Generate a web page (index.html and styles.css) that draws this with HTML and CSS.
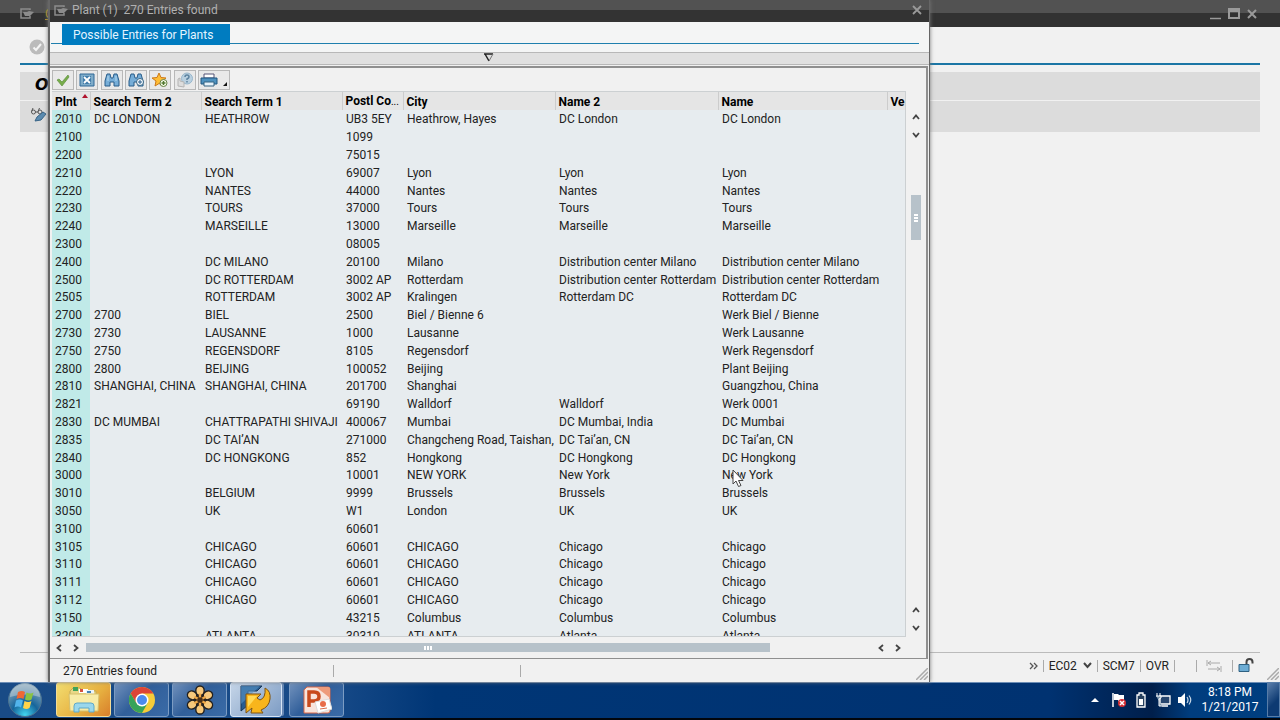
FILE: index.html
```html
<!DOCTYPE html>
<html lang="en">
<head>
<meta charset="utf-8">
<title>Plant (1) 270 Entries found</title>
<link rel="stylesheet" href="styles.css">
</head>
<body>
<main class="desktop">
  <section class="window">
    <header class="window-title">
      <button class="menu-btn" aria-label="Menu"><svg width="14" height="11" viewBox="0 0 14 11"><path d="M10 2V1H1v9h9V8" fill="none" stroke="#8c8c8c" stroke-width="1.500"/><path d="M3 4h4l2-1 5 1-4 4H5z" fill="#8c8c8c"/></svg></button>
      <span class="menu-word">G</span>
      <span class="controls">
        <button aria-label="Minimize"><svg width="12" height="12" viewBox="0 0 12 12"><path d="M0 10.500h11" stroke="#9a9a9a" stroke-width="1.500"/></svg></button>
        <button aria-label="Maximize"><svg width="12" height="12" viewBox="0 0 12 12"><path d="M1 1h10v9H1zM1 3h10" fill="none" stroke="#9a9a9a" stroke-width="2"/></svg></button>
        <button aria-label="Close window"><svg width="12" height="12" viewBox="0 0 12 12"><path d="M2 2l8 8M10 2l-8 8" stroke="#9a9a9a" stroke-width="2"/></svg></button>
      </span>
    </header>
    <div class="window-bar"><svg width="16" height="16" viewBox="0 0 16 16"><circle cx="8" cy="8" r="7.500" fill="#bbb"/><path d="M4.500 8.500l2.500 2.500 5-6" fill="none" stroke="#f4f4f4" stroke-width="2"/></svg></div>
    <h1 class="window-heading">O</h1>
    <div class="window-tools"><svg width="18" height="18" viewBox="0 0 18 18"><g fill="none" stroke="#555"><circle cx="3.500" cy="6" r="2"/><circle cx="10" cy="6" r="2"/><path d="M1.500 5.500L3 2M8 5.500L9.500 2M5.500 6H8"/></g><path d="M5 15l2-4 6-5 3 2-5 6z" fill="#5b8bb0" stroke="#386487"/></svg></div>
    <div class="window-body"></div>
    <footer class="window-status">
      <svg width="9" height="10" viewBox="0 0 9 10"><path d="M1 2l3 3-3 3M5 2l3 3-3 3" fill="none" stroke="#555" stroke-width="1.300"/></svg>
      <i class="sep"></i>
      <select aria-label="Transaction"><option>EC02</option></select>
      <svg class="drop" width="9" height="8" viewBox="0 0 9 8"><path d="M1 1l3.500 4L8 1" fill="none" stroke="#444" stroke-width="2"/></svg>
      <i class="sep"></i><span>SCM7</span><i class="sep"></i><span>OVR</span><i class="sep"></i>
      <i class="sep far"></i>
      <svg class="arrows" width="16" height="12" viewBox="0 0 16 12"><path d="M1 0v6M2 3h12M5 1L2 3l3 2M15 6v6M2 9h12M11 7l3 2-3 2" fill="none" stroke="#aaa"/></svg>
      <i class="sep"></i>
      <svg width="16" height="15" viewBox="0 0 16 15"><path d="M8.500 7V4q0-3 3-3t3 3v1.500" fill="none" stroke="#444" stroke-width="2"/><path d="M1 6.500h10v7H1z" fill="#6cacd4" stroke="#2e6182"/></svg>
    </footer>
    <svg class="grip" width="12" height="12" viewBox="0 0 12 12"><path d="M0 12L12 0M4 12l8-8M8 12l4-4" stroke="#aaa" stroke-width="1.500"/></svg>
  </section>

  <section class="dialog" role="dialog" aria-label="Plant (1) 270 Entries found">
    <header class="dialog-title">
      <svg width="14" height="11" viewBox="0 0 14 11"><path d="M10 2V1H1v9h9V8" fill="none" stroke="#8c8c8c" stroke-width="1.500"/><path d="M3 4h4l2-1 5 1-4 4H5z" fill="#8c8c8c"/></svg>
      <span>Plant (1)&nbsp; 270 Entries found</span>
      <button aria-label="Close dialog"><svg width="12" height="12" viewBox="0 0 12 12"><path d="M2 2l8 8M10 2l-8 8" stroke="#9a9a9a" stroke-width="1.800"/></svg></button>
    </header>
    <div class="tabs"><button>Possible Entries for Plants</button></div>
    <div class="splitter"><svg width="10" height="9" viewBox="0 0 10 9"><path d="M1 1h8L5 8z" fill="#ddd"/><path d="M0 1h9M1 1l4 7" fill="none" stroke="#222" stroke-width="1.500"/><path d="M9 1L5 8" stroke="#777"/></svg></div>
    <div class="pane">
      <div class="tools">
        <button aria-label="Copy"><svg width="16" height="16" viewBox="0 0 16 16"><path d="M2 8l2-1 3 3 6-7 1 2-7 9z" fill="#78ad4b" stroke="#5f9140" stroke-width=".7"/></svg></button>
        <button aria-label="Close list"><svg width="16" height="16" viewBox="0 0 16 16"><path d="M1 2h14v12H1z" fill="#7facc9" stroke="#306997"/><path d="M4 4h8v8H4z" fill="#427dab"/><path d="M5 5l6 6M11 5l-6 6" stroke="#fff" stroke-width="1.800"/></svg></button>
        <button aria-label="Find"><svg width="16" height="16" viewBox="0 0 16 16"><path d="M3 2h3l1 4h2l1-4h3l2 7v5h-5v-4H6v4H1V9z" fill="#76add7" stroke="#285c89"/><path d="M4 4v5M12 4v5" stroke="#b9dbef"/></svg></button>
        <button aria-label="Find next"><svg width="16" height="16" viewBox="0 0 16 16"><path d="M3 2h3l1 4h2l1-4h3l2 7v5h-5v-4H6v4H1V9z" fill="#76add7" stroke="#285c89"/><circle cx="12" cy="10" r="3.500" fill="#f7fbff" stroke="#386684"/><path d="M12 8v4M10 10h4" stroke="#285c89"/></svg></button>
        <button aria-label="Add to personal list"><svg width="16" height="16" viewBox="0 0 16 16"><path d="M7 1l2 4.500 5 .5-4 3 1 5-4-2.500L3 14l1-5-4-3 5-.5z" fill="#ffbd35" stroke="#cc7918"/><circle cx="11.500" cy="11" r="3.500" fill="#f6fce9" stroke="#668345"/><path d="M11.500 9v4M9.500 11h4" stroke="#507730" stroke-width="1.400"/></svg></button>
        <button aria-label="Help"><svg width="16" height="16" viewBox="0 0 16 16"><circle cx="10" cy="6.500" r="5.500" fill="#b9d0e0" stroke="#98b6cb"/><path d="M8 5q0-2 2-2t2 2q0 1-2 2v1M10 9v1.500" fill="none" stroke="#5d83a0" stroke-width="1.500"/><path d="M1 14V7l2-1v3l4 1v5z" fill="#ddd" stroke="#b4b4b4"/></svg></button>
        <button class="print" aria-label="Print"><svg width="18" height="16" viewBox="0 0 18 16"><path d="M4 2h10v4H4z" fill="#fff" stroke="#557"/><path d="M1 6h16v6H1z" fill="#4e91be" stroke="#215680"/><path d="M4 10h10v4H4z" fill="#e6f2fa" stroke="#356281"/></svg><svg width="6" height="16" viewBox="0 0 6 16"><path d="M5 10v4H1z" fill="#111"/></svg></button>
      </div>
      <div class="grid">
        <div class="list">
        <table>
          <colgroup><col class="c-plnt"><col class="c-st2"><col class="c-st1"><col class="c-post"><col class="c-city"><col class="c-name2"><col class="c-name"><col></colgroup>
          <thead><tr><th>Plnt<svg class="sort" width="6" height="4" viewBox="0 0 6 4"><path d="M0 4l3-4 3 4z" fill="#b0122d"/></svg><th>Search Term 2<th>Search Term 1<th class="cut">Postl Co<small>...</small><th>City<th>Name 2<th>Name<th>Ve</tr></thead>
          <tbody>
          <tr><td>2010<td>DC LONDON<td>HEATHROW<td>UB3 5EY<td>Heathrow, Hayes<td>DC London<td>DC London<td></tr>
          <tr><td>2100<td><td><td>1099<td><td><td><td></tr>
          <tr><td>2200<td><td><td>75015<td><td><td><td></tr>
          <tr><td>2210<td><td>LYON<td>69007<td>Lyon<td>Lyon<td>Lyon<td></tr>
          <tr><td>2220<td><td>NANTES<td>44000<td>Nantes<td>Nantes<td>Nantes<td></tr>
          <tr><td>2230<td><td>TOURS<td>37000<td>Tours<td>Tours<td>Tours<td></tr>
          <tr><td>2240<td><td>MARSEILLE<td>13000<td>Marseille<td>Marseille<td>Marseille<td></tr>
          <tr><td>2300<td><td><td>08005<td><td><td><td></tr>
          <tr><td>2400<td><td>DC MILANO<td>20100<td>Milano<td>Distribution center Milano<td>Distribution center Milano<td></tr>
          <tr><td>2500<td><td>DC ROTTERDAM<td>3002 AP<td>Rotterdam<td>Distribution center Rotterdam<td>Distribution center Rotterdam<td></tr>
          <tr><td>2505<td><td>ROTTERDAM<td>3002 AP<td>Kralingen<td>Rotterdam DC<td>Rotterdam DC<td></tr>
          <tr><td>2700<td>2700<td>BIEL<td>2500<td>Biel / Bienne 6<td><td>Werk Biel / Bienne<td></tr>
          <tr><td>2730<td>2730<td>LAUSANNE<td>1000<td>Lausanne<td><td>Werk Lausanne<td></tr>
          <tr><td>2750<td>2750<td>REGENSDORF<td>8105<td>Regensdorf<td><td>Werk Regensdorf<td></tr>
          <tr><td>2800<td>2800<td>BEIJING<td>100052<td>Beijing<td><td>Plant Beijing<td></tr>
          <tr><td>2810<td>SHANGHAI, CHINA<td>SHANGHAI, CHINA<td>201700<td>Shanghai<td><td>Guangzhou, China<td></tr>
          <tr><td>2821<td><td><td>69190<td>Walldorf<td>Walldorf<td>Werk 0001<td></tr>
          <tr><td>2830<td>DC MUMBAI<td>CHATTRAPATHI SHIVAJI<td>400067<td>Mumbai<td>DC Mumbai, India<td>DC Mumbai<td></tr>
          <tr><td>2835<td><td>DC TAI’AN<td>271000<td>Changcheng Road, Taishan,<td>DC Tai’an, CN<td>DC Tai’an, CN<td></tr>
          <tr><td>2840<td><td>DC HONGKONG<td>852<td>Hongkong<td>DC Hongkong<td>DC Hongkong<td></tr>
          <tr><td>3000<td><td><td>10001<td>NEW YORK<td>New York<td>New York<td></tr>
          <tr><td>3010<td><td>BELGIUM<td>9999<td>Brussels<td>Brussels<td>Brussels<td></tr>
          <tr><td>3050<td><td>UK<td>W1<td>London<td>UK<td>UK<td></tr>
          <tr><td>3100<td><td><td>60601<td><td><td><td></tr>
          <tr><td>3105<td><td>CHICAGO<td>60601<td>CHICAGO<td>Chicago<td>Chicago<td></tr>
          <tr><td>3110<td><td>CHICAGO<td>60601<td>CHICAGO<td>Chicago<td>Chicago<td></tr>
          <tr><td>3111<td><td>CHICAGO<td>60601<td>CHICAGO<td>Chicago<td>Chicago<td></tr>
          <tr><td>3112<td><td>CHICAGO<td>60601<td>CHICAGO<td>Chicago<td>Chicago<td></tr>
          <tr><td>3150<td><td><td>43215<td>Columbus<td>Columbus<td>Columbus<td></tr>
          <tr><td>3200<td><td>ATLANTA<td>30310<td>ATLANTA<td>Atlanta<td>Atlanta<td></tr>
          </tbody>
        </table>
        </div>
        <div class="vscroll">
          <button aria-label="Page up"><svg width="8" height="6" viewBox="0 0 8 6"><path d="M1 5l3-3.500L7 5" fill="none" stroke="#444" stroke-width="1.800"/></svg></button>
          <button aria-label="Row down"><svg width="8" height="6" viewBox="0 0 8 6"><path d="M1 1l3 3.500L7 1" fill="none" stroke="#444" stroke-width="1.800"/></svg></button>
          <div class="track"><div class="thumb"><i></i><i></i><i></i></div></div>
          <button aria-label="Row up"><svg width="8" height="6" viewBox="0 0 8 6"><path d="M1 5l3-3.500L7 5" fill="none" stroke="#444" stroke-width="1.800"/></svg></button>
          <button aria-label="Page down"><svg width="8" height="6" viewBox="0 0 8 6"><path d="M1 1l3 3.500L7 1" fill="none" stroke="#444" stroke-width="1.800"/></svg></button>
        </div>
        <div class="hscroll">
          <button aria-label="Page left"><svg width="6" height="8" viewBox="0 0 6 8"><path d="M5 1L1.500 4 5 7" fill="none" stroke="#444" stroke-width="1.800"/></svg></button>
          <button aria-label="Column right"><svg width="6" height="8" viewBox="0 0 6 8"><path d="M1 1l3.500 3L1 7" fill="none" stroke="#444" stroke-width="1.800"/></svg></button>
          <div class="track"><div class="thumb"><i></i><i></i><i></i></div></div>
          <button aria-label="Column left"><svg width="6" height="8" viewBox="0 0 6 8"><path d="M5 1L1.500 4 5 7" fill="none" stroke="#444" stroke-width="1.800"/></svg></button>
          <button aria-label="Page right"><svg width="6" height="8" viewBox="0 0 6 8"><path d="M1 1l3.500 3L1 7" fill="none" stroke="#444" stroke-width="1.800"/></svg></button>
        </div>
      </div>
    </div>
    <footer class="dialog-status"><span class="message">270 Entries found</span><i class="sep"></i><i class="sep second"></i></footer>
    <svg class="grip" width="12" height="12" viewBox="0 0 12 12"><path d="M0 12L12 0M4 12l8-8M8 12l4-4" stroke="#aaa" stroke-width="1.500"/></svg>
  </section>
  <svg class="pointer" width="13" height="19" viewBox="0 0 13 19"><path d="M1 1v14l3-3 2.500 5.500 2.500-1-2.500-5H11z" fill="#fff" stroke="#444"/></svg>
</main>

<nav class="taskbar" aria-label="Taskbar">
  <button class="start" aria-label="Start"><svg width="36" height="36" viewBox="0 0 36 36"><defs><radialGradient id="orb" cx=".5" cy=".95" r=".9"><stop offset="0" stop-color="#42d6ef"/><stop offset=".45" stop-color="#16659b"/><stop offset="1" stop-color="#8da9bd"/></radialGradient></defs><circle cx="18" cy="18" r="16.500" fill="url(#orb)" stroke="#4c7391"/><path d="M3 15a15 14 0 0 1 30 0q-15-5-30 0z" fill="#c4d3dc" opacity=".5"/><path d="M11 10q4-2 7 0l-1.500 7q-3-2-7 0z" fill="#ef6834"/><path d="M19.500 10.500q4 2 7 0l-2 7q-3 2-6.500 0z" fill="#8ac342"/><path d="M9 18.500q4-2 7 0l-2 7q-3-2-6.500 0z" fill="#52b4eb"/><path d="M17.500 19q4 2 7 0l-2 7q-3 2-6.500 0z" fill="#ffd348"/></svg></button>
  <button class="task explorer" aria-label="File Explorer"><svg width="32" height="28" viewBox="0 0 32 28"><path d="M2 5l3-3h7l3 3h13v18H2z" fill="#e9d887" stroke="#c2a955"/><path d="M5 1h5v4H5z" fill="#3fa35a"/><path d="M11 3h9v4h-9z" fill="#fff"/><path d="M12 3h3v3h-3z" fill="#d55140"/><path d="M18 4h8v4h-8z" fill="#edf4f8"/><path d="M19 5h4v2h-4z" fill="#4382b5"/><path d="M1 8h30l-1 17H2z" fill="#f8eca8" stroke="#d6c06d"/><path d="M6 26v-6q0-3 3-3h14q3 0 3 3v6h-5v-4H11v4z" fill="#9ad7ec" stroke="#5fa8c9"/></svg></button>
  <button class="task" aria-label="Google Chrome"><svg width="28" height="28" viewBox="0 0 28 28"><circle cx="14" cy="14" r="13" fill="#f5cc3a"/><path d="M2.700 7.500A13 13 0 0 1 25.300 7.500H14L8.400 17.200z" fill="#dc4437"/><path d="M2.700 7.500A13 13 0 0 0 14 27l5.600-9.800H8.400z" fill="#37a35a"/><circle cx="14" cy="14" r="6.500" fill="#fff"/><circle cx="14" cy="14" r="5" fill="#4b8bef"/></svg></button>
  <button class="task" aria-label="Meeting"><svg width="30" height="30" viewBox="0 0 32 32"><g fill="#f6c87c" stroke="#24201d" stroke-width="1.500"><ellipse cx="16" cy="6" rx="4.500" ry="5"/><ellipse cx="24.500" cy="11" rx="5" ry="4.500" transform="rotate(-30 24.500 11)"/><ellipse cx="24.500" cy="21" rx="5" ry="4.500" transform="rotate(30 24.500 21)"/><ellipse cx="16" cy="26" rx="4.500" ry="5"/><ellipse cx="7.500" cy="21" rx="5" ry="4.500" transform="rotate(-30 7.500 21)"/><ellipse cx="7.500" cy="11" rx="5" ry="4.500" transform="rotate(30 7.500 11)"/></g><circle cx="16" cy="16" r="6" fill="#28211c"/><path d="M16 9v14M10 12.500l12 7M22 12.500l-12 7" stroke="#f1a947" stroke-width="2.500"/><circle cx="16" cy="16" r="3" fill="#4a3018"/></svg></button>
  <button class="task active" aria-label="SAP Logon"><svg width="32" height="30" viewBox="0 0 32 30"><path d="M1 1h21l-5 5h-9v14l-7 6z" fill="#285c91" stroke="#163557"/><path d="M1 1h19L1 19z" fill="#5793c4" opacity=".6"/><path d="M6 9h15l-4 4 3 2q6-2 5-12 6 3 5 11-1 8-9 11l2 3H11l1-5-6 5z" fill="#f8b51c" stroke="#7e5313"/><path d="M8 11h9l-9 11z" fill="#ffd958"/></svg></button>
  <button class="task ppt" aria-label="PowerPoint"><svg width="30" height="28" viewBox="0 0 30 28"><path d="M5 1h21q2 0 2 2v22q0 2-2 2H2V4z" fill="#f8e4dc" stroke="#d96746"/><path d="M14 1h12q2 0 2 2v9z" fill="#ee9b7b"/><path d="M7 21V6h5q5 0 5 4.500T12 15H7" fill="none" stroke="#c84a1d" stroke-width="3.500"/><path d="M13 16l14-3 3 10-14 4z" fill="#fff" stroke="#ddd"/><circle cx="21" cy="18" r="3" fill="#e86d4a"/><path d="M18 23l7-1" stroke="#d86d4c"/></svg></button>
  <div class="tray">
    <svg width="8" height="5" viewBox="0 0 8 5"><path d="M0 5l4-4 4 4z" fill="#fff"/></svg>
    <svg width="16" height="16" viewBox="0 0 16 16"><path d="M2 1v14" stroke="#fff" stroke-width="1.500"/><path d="M3 2h4l1 1h5v7H8L7 8H3z" fill="#fff"/><circle cx="11" cy="11" r="4" fill="#d52e34"/><path d="M9 9l4 4M13 9l-4 4" stroke="#fff" stroke-width="1.500"/></svg>
    <svg width="16" height="16" viewBox="0 0 16 16"><path d="M6 1h4v2h2v12H4V3h2z" fill="#26405e" stroke="#fff" stroke-width="1.300"/><path d="M6 7h4v6H6z" fill="#fff"/></svg>
    <svg width="16" height="16" viewBox="0 0 16 16"><path d="M5 4h10v8H5zM7 14h6" fill="#27466e" stroke="#fff" stroke-width="1.300"/><path d="M2 1v3M5 1v3M1 4h5v2L4 7v7h3" fill="#7e96ac" stroke="#fff"/></svg>
    <svg width="16" height="16" viewBox="0 0 16 16"><path d="M1 5h3l4-4v14l-4-4H1z" fill="#fff"/><path d="M10 5q2 3 0 6M12 3.500q3.500 4.500 0 9" fill="none" stroke="#c8d8e6" stroke-width="1.200"/></svg>
  </div>
  <time class="clock"><span>8:18 PM</span><span>1/21/2017</span></time>
  <button class="show-desktop" aria-label="Show desktop"></button>
</nav>
</body>
</html>
```
FILE: styles.css
```css
* { box-sizing: border-box; }
body {
  margin: 0;
  height: 100vh;
  display: flex;
  flex-direction: column;
  overflow: hidden;
  font: 12px/16px Roboto, Tahoma, sans-serif;
  color: #222;
  background: #f1f1f1;
}
button, select {
  appearance: none;
  border: 0;
  padding: 0;
  margin: 0;
  background: none;
  font: inherit;
  color: inherit;
}
svg { display: block; flex: none; }
.desktop { position: relative; flex: 1; min-height: 0; }
.sep { width: 1px; height: 12px; background: #aaa; }
.grip { position: absolute; right: 1px; bottom: 2px; }

/* Window behind the dialog */
.window { height: 100%; display: flex; flex-direction: column; background: #f1f1f1; }
.window-title {
  display: flex;
  align-items: center;
  height: 27px;
  flex: none;
  padding: 0 22px 0 20px;
  background: linear-gradient(#525252 0 13px, #323232 13px);
}
.menu-word { margin-left: 11px; color: #b59524; text-decoration: underline; }
.controls { display: flex; gap: 6px; margin-left: auto; }
.window-bar {
  height: 38px;
  flex: none;
  margin: 0 20px;
  padding: 12px 9px 0;
  border-bottom: 2px solid #1b76a5;
}
.window-heading {
  height: 28px;
  flex: none;
  margin: 7px 20px 1px;
  padding: 0 15px;
  font: italic bold 16px/25px "DejaVu Sans", sans-serif;
  color: #000;
  background: #dcdcdc;
}
.window-tools { height: 31px; flex: none; margin: 0 20px; padding: 5px 10px; background: #dcdcdc; }
.window-body { flex: 1; }
.window-status {
  display: flex;
  align-items: center;
  justify-content: flex-end;
  gap: 5px;
  height: 30px;
  flex: none;
  margin: 0 20px;
  padding: 0 6px 4px 0;
  border-top: 1px solid #bbb;
}
.far { margin-left: 16px; }
.arrows { margin: 0 5px 0 4px; }

/* Search help dialog */
.dialog {
  position: absolute;
  top: 0;
  bottom: 0;
  left: 48px;
  width: 882px;
  display: flex;
  flex-direction: column;
  background: #f1f1f1;
  border: solid #666;
  border-width: 0 1px 0 2px;
  box-shadow: 0 0 4px #777;
}
.dialog-title {
  display: flex;
  align-items: center;
  gap: 4px;
  height: 22px;
  flex: none;
  padding: 0 6px 2px 4px;
  color: #b0b0b0;
  background: linear-gradient(#525252 0 10px, #333 10px);
}
.dialog-title button { margin-left: auto; }
.tabs {
  height: 30px;
  flex: none;
  padding: 2px 9px 0 1px;
  background: linear-gradient(#1f7fae, #1f7fae) 1px 21px / calc(100% - 11px) 1px no-repeat #f4f5f5;
}
.tabs button {
  height: 21px;
  width: 168px;
  margin-left: 11px;
  padding: 0 11px;
  text-align: left;
  white-space: nowrap;
  color: #e4f4ff;
  background: #007cc0;
}
.splitter {
  display: flex;
  justify-content: center;
  height: 13px;
  flex: none;
  padding-right: 2px;
  border: solid #b8b8b8;
  border-width: 1px 0;
  background: #e0e0e0;
}
.pane {
  flex: 1;
  min-height: 0;
  display: flex;
  flex-direction: column;
  margin: 1px 1px 0 0;
  padding-left: 2px;
  border: 2px solid #8f8f8f;
  border-width: 2px 2px 1px 0;
}
.tools {
  display: flex;
  justify-content: space-between;
  align-items: center;
  width: 178px;
  height: 23px;
  flex: none;
}
.tools button {
  display: flex;
  align-items: center;
  justify-content: center;
  width: 22px;
  height: 20px;
  border: 1px solid #b8b8b8;
  background: #e9e9e9;
}
.tools .print { width: 32px; gap: 4px; }
.grid {
  flex: 1;
  min-height: 0;
  display: grid;
  grid-template: minmax(0, 1fr) 21px / minmax(0, 1fr) 20px;
}
.list { overflow: hidden; border: solid #ccd0d2; border-width: 1px 1px 1px 0; background: #e7ecef; }
table { width: 100%; height: 552px; table-layout: fixed; border-collapse: collapse; }
.c-plnt { width: 38px; }
.c-st2 { width: 111px; }
.c-st1 { width: 141px; }
.c-post { width: 61px; }
.c-city { width: 152px; }
.c-name2 { width: 163px; }
.c-name { width: 169px; }
th, td { padding: 1px 0 0 4px; text-align: left; white-space: nowrap; }
th { position: relative; height: 18px; padding-left: 3px; color: #000; background: #e5e5e5; border-right: 1px solid #ccc; }
th:last-child { border-right: 0; }
td:first-child, th:first-child { padding-left: 3px; }
td:first-child { background: #c0eae8; }
.sort { position: absolute; top: 2px; right: 2px; }
.cut small { font-size: 10px; font-weight: normal; }

.vscroll, .hscroll { display: flex; align-items: center; }
.vscroll { flex-direction: column; padding: 17px 0 0; }
.vscroll button { display: grid; place-items: center; width: 20px; height: 18px; }
.vscroll .track { flex: 1; padding-top: 51px; }
.vscroll .thumb { flex-direction: column; width: 10px; height: 45px; }
.hscroll button { display: grid; place-items: center; width: 17px; height: 20px; }
.hscroll .track { flex: 1; }
.hscroll button:first-child { width: 14px; }
.hscroll button:nth-child(2) { width: 20px; }
.hscroll .thumb { width: 87%; height: 9px; }
.thumb { display: flex; align-items: center; justify-content: center; gap: 1px; background: #b7c2ca; }
.thumb i { width: 2px; height: 4px; background: #fff; }
.vscroll .thumb i { width: 4px; height: 2px; }
.dialog-status { display: flex; align-items: center; height: 23px; flex: none; padding-left: 13px; }
.message { width: 270px; }
.second { margin-left: 186px; }
.pointer { position: absolute; left: 732px; top: 469px; }

/* Taskbar */
.taskbar {
  display: flex;
  align-items: center;
  height: 38px;
  flex: none;
  padding-bottom: 2px;
  border-top: 1px solid #6c8db5;
  border-bottom: 2px solid #02060c;
  color: #fff;
  background: linear-gradient(90deg, #194b86, #174a88 26%, #003676 34%, #003271 82%, #001f4b 90%, #003d7e 93%, #003f80);
}
.start { width: 36px; height: 36px; margin: 0 13px 0 7px; }
.task {
  display: grid;
  place-items: center;
  width: 55px;
  height: 35px;
  margin-right: 3px;
  border: 1px solid #7c9cc3;
  border-radius: 3px;
  background: linear-gradient(135deg, #7191bc, #315f9a 45%, #3a6ba7);
}
.explorer { border-color: #f4dc97; background: linear-gradient(135deg, #f2dd70, #e7b040 60%, #d87e2b); }
.active { width: 52px; border-color: #d7e5f5; background: linear-gradient(135deg, #c5d5e8, #7d9cc4); box-shadow: 3px 0 0 -1px #6788b4; }
.ppt { margin-left: 4px; }
.tray { display: flex; align-items: center; gap: 6px; margin-left: auto; }
.tray svg:first-child { margin-right: 6px; }
.clock {
  display: flex;
  flex-direction: column;
  align-items: center;
  width: 74px;
  font: 12px/15px Roboto, sans-serif;
}
.show-desktop { width: 13px; height: 35px; border: 1px solid #587da8; background: linear-gradient(135deg, #5a7eaa, #0d3a72 60%); }
```
